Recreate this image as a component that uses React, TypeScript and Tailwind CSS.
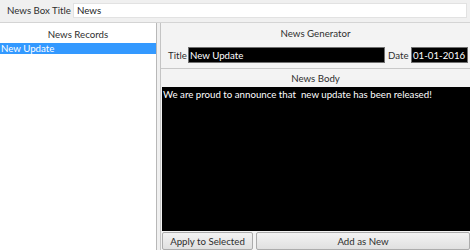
import React from "react";

const font = { fontFamily: '"Lato", "Open Sans", sans-serif' };

export default function App() {
  return (
    <div
      className="w-[470px] h-[250px] overflow-hidden bg-[#f0f0f0] text-[9.7px] text-[#2e2e2e] flex flex-col whitespace-nowrap"
      style={font}
    >
      {/* top bar */}
      <div className="h-[23px] flex items-start pt-[3px] border-b border-[#d4d4d4]">
        <div className="w-[73px] pl-[7px] leading-[15px]">News Box Title</div>
        <div className="w-[394px] h-[15px] bg-white border border-[#e2e2e2] leading-[13px] pl-[3px] text-[#222]">
          News
        </div>
      </div>

      {/* main */}
      <div className="flex-1 flex">
        {/* left */}
        <div className="w-[157px] bg-white border-r border-[#b8b8b8] flex flex-col">
          <div className="h-[20px] flex items-center justify-center pt-[2px]">News Records</div>
          <div className="h-[11px] bg-[#3399ff] text-white leading-[11px] pl-[1px]">New Update</div>
        </div>

        {/* right */}
        <div className="flex-1 ml-[3px] border-l border-[#c4c4c4] bg-[#f3f3f3] flex flex-col">
          <div className="h-[20px] flex items-center justify-center pt-[1px]">News Generator</div>
          <div className="h-[25px] flex items-start pl-[7px] pr-[2px] pt-[4px]">
            <span className="w-[20px] leading-[16px]">Title</span>
            <div className="w-[197px] h-[16px] bg-black border border-[#707070] text-white leading-[14px] pl-[1px]">
              New Update
            </div>
            <span className="ml-[3px] w-[23px] leading-[16px]">Date</span>
            <div className="flex-1 h-[16px] bg-black border border-[#707070] text-white leading-[14px] pl-[1px]">
              01-01-2016
            </div>
          </div>
          <div className="h-[19px] border-t border-[#c8c8c8] flex items-center justify-center">
            News Body
          </div>
          <div className="flex-1 ml-[1px] bg-black text-white pt-[1px] pl-[1px] leading-[12px]">
            We are proud to announce that&nbsp; new update has been released!
          </div>
          <div className="h-[19px] flex gap-[3px] pl-[1px] pt-[1px]">
            <button className="w-[91px] h-[18px] rounded-[2px] border border-[#acacac] bg-gradient-to-b from-[#f3f3f3] to-[#e0e0e0] text-[#2e2e2e] leading-[16px]">
              Apply to Selected
            </button>
            <button className="flex-1 h-[18px] rounded-[2px] border border-[#acacac] bg-gradient-to-b from-[#f3f3f3] to-[#e0e0e0] text-[#2e2e2e] leading-[16px]">
              Add as New
            </button>
          </div>
        </div>
      </div>
    </div>
  );
}
